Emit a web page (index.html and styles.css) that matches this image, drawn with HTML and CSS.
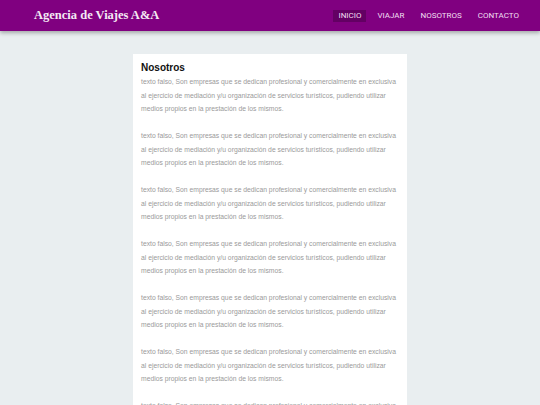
FILE: index.html
```html
<!DOCTYPE html>
<html lang="es">
<head>
<meta charset="utf-8">
<title>Agencia de Viajes A&amp;A</title>
<link rel="stylesheet" href="styles.css">
</head>
<body>
<header class="topbar">
  <div class="brand">Agencia de Viajes A&amp;A</div>
  <nav class="nav">
    <a class="nav-link active" href="#">INICIO</a>
    <a class="nav-link" href="#">VIAJAR</a>
    <a class="nav-link" href="#">NOSOTROS</a>
    <a class="nav-link" href="#">CONTACTO</a>
  </nav>
</header>
<main class="page">
  <section class="card">
    <h1 class="card-title">Nosotros</h1>
    <p class="text">texto falso, Son empresas que se dedican profesional y comercialmente en exclusiva al ejercicio de mediación y/u organización de servicios turísticos, pudiendo utilizar medios propios en la prestación de los mismos.</p>
    <p class="text">texto falso, Son empresas que se dedican profesional y comercialmente en exclusiva al ejercicio de mediación y/u organización de servicios turísticos, pudiendo utilizar medios propios en la prestación de los mismos.</p>
    <p class="text">texto falso, Son empresas que se dedican profesional y comercialmente en exclusiva al ejercicio de mediación y/u organización de servicios turísticos, pudiendo utilizar medios propios en la prestación de los mismos.</p>
    <p class="text">texto falso, Son empresas que se dedican profesional y comercialmente en exclusiva al ejercicio de mediación y/u organización de servicios turísticos, pudiendo utilizar medios propios en la prestación de los mismos.</p>
    <p class="text">texto falso, Son empresas que se dedican profesional y comercialmente en exclusiva al ejercicio de mediación y/u organización de servicios turísticos, pudiendo utilizar medios propios en la prestación de los mismos.</p>
    <p class="text">texto falso, Son empresas que se dedican profesional y comercialmente en exclusiva al ejercicio de mediación y/u organización de servicios turísticos, pudiendo utilizar medios propios en la prestación de los mismos.</p>
    <p class="text">texto falso, Son empresas que se dedican profesional y comercialmente en exclusiva al ejercicio de mediación y/u organización de servicios turísticos, pudiendo utilizar medios propios en la prestación de los mismos.</p>
  </section>
</main>
</body>
</html>
```
FILE: styles.css
```css
html, body {
  margin: 0;
  padding: 0;
}
body {
  background: #e9eef0;
  font-family: "Liberation Sans", Arial, sans-serif;
  overflow: hidden;
  height: 405px;
}
.topbar {
  height: 31px;
  background: #800080;
  display: flex;
  align-items: center;
  justify-content: space-between;
  padding: 0 16px 0 34px;
  box-shadow: 0 2px 4px rgba(0, 0, 0, 0.3);
  position: relative;
  z-index: 1;
}
.brand {
  font-family: "Liberation Serif", "Times New Roman", serif;
  font-weight: bold;
  font-size: 12.5px;
  color: #f4eaf4;
}
.nav {
  display: flex;
  align-items: center;
  gap: 6px;
  margin-top: 1px;
}
.nav-link {
  font-family: Roboto, "Liberation Sans", sans-serif;
  color: #f1dff1;
  text-decoration: none;
  font-size: 8px;
  line-height: 10px;
  padding: 1px 5px;
}
.nav-link.active {
  background: #630063;
}
.page {
  display: flex;
  justify-content: center;
  padding-top: 23px;
}
.card {
  width: 258px;
  background: #ffffff;
  padding: 6px 8px 8px;
}
.card-title {
  margin: 0;
  font-size: 10px;
  font-weight: bold;
  color: #111;
  line-height: 15px;
}
.text {
  margin: 0 0 13.5px;
  font-size: 6.78px;
  line-height: 13.5px;
  color: #9a9a9a;
}
```
